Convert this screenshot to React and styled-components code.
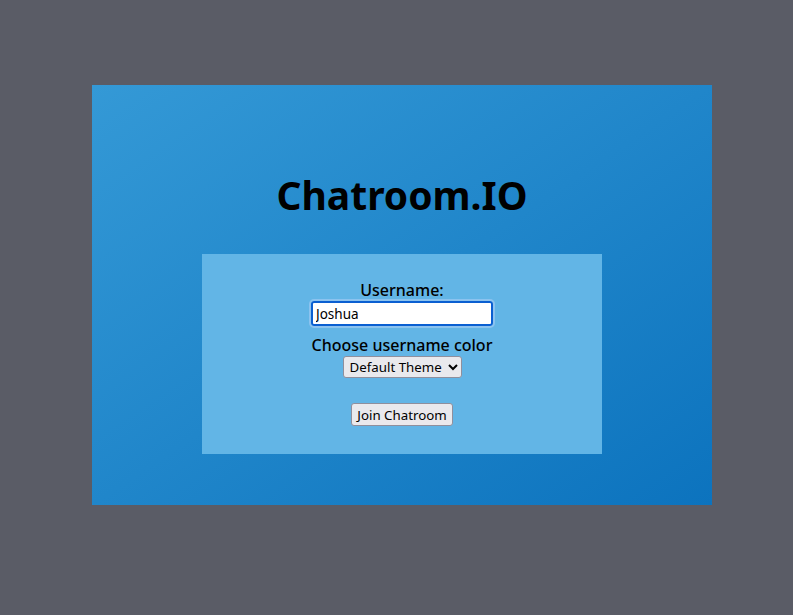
import React from "react";
import styled, { createGlobalStyle } from "styled-components";

const Global = createGlobalStyle`
  html, body { margin: 0; padding: 0; }
  body {
    background: #5a5c66;
    font-family: "Noto Sans", "DejaVu Sans", sans-serif;
    width: 793px;
    height: 615px;
    overflow: hidden;
  }
`;

const Page = styled.div`
  display: flex;
  justify-content: flex-start;
  padding: 85px 0 0 92px;
  box-sizing: border-box;
  height: 615px;
`;

const Card = styled.div`
  width: 620px;
  height: 420px;
  background: linear-gradient(to bottom right, #3499d6 0%, #0c73be 100%);
  display: flex;
  flex-direction: column;
  align-items: center;
`;

const Title = styled.h1`
  margin: 86px 0 0;
  font-size: 39px;
  font-weight: bold;
  color: #000;
  line-height: 48px;
`;

const Panel = styled.form`
  margin-top: 35px;
  width: 400px;
  height: 200px;
  background: #62b5e6;
  display: flex;
  flex-direction: column;
  align-items: center;
  padding-top: 27px;
  box-sizing: border-box;
`;

const Label = styled.label`
  font-size: 16px;
  line-height: 19px;
  color: #000;
  font-weight: 500;
`;

const Input = styled.input`
  width: 182px;
  height: 25px;
  box-sizing: border-box;
  margin-top: 1px;
  font-family: "Noto Sans", sans-serif;
  font-size: 13.5px;
  padding: 0 3px;
  border: 2px solid #0b5fd1;
  border-radius: 3px;
  outline: 2px solid #8cc3ef;
  outline-offset: 0;
  background: #fff;
  color: #000;
`;

const Label2 = styled(Label)`
  margin-top: 10px;
`;

const Select = styled.select`
  margin-top: 1px;
  width: 119px;
  height: 22px;
  font-family: "Noto Sans", sans-serif;
  font-size: 13.3px;
  border: 1px solid #8f8f9d;
  border-radius: 3px;
  background: #e9e9ed;
  color: #000;
  padding: 0 2px;
`;

const Button = styled.button`
  margin-top: 25px;
  width: 102px;
  height: 23px;
  font-family: "Noto Sans", sans-serif;
  font-size: 13.3px;
  border: 1px solid #8f8f9d;
  border-radius: 3px;
  background: #e9e9ed;
  color: #000;
  padding: 0;
`;

export default function App() {
  return (
    <>
      <Global />
      <Page>
        <Card>
          <Title>Chatroom.IO</Title>
          <Panel onSubmit={(e) => e.preventDefault()}>
            <Label htmlFor="u">Username:</Label>
            <Input id="u" defaultValue="Joshua" />
            <Label2 htmlFor="c">Choose username color</Label2>
            <Select id="c" defaultValue="default">
              <option value="default">Default Theme</option>
            </Select>
            <Button type="submit">Join Chatroom</Button>
          </Panel>
        </Card>
      </Page>
    </>
  );
}
